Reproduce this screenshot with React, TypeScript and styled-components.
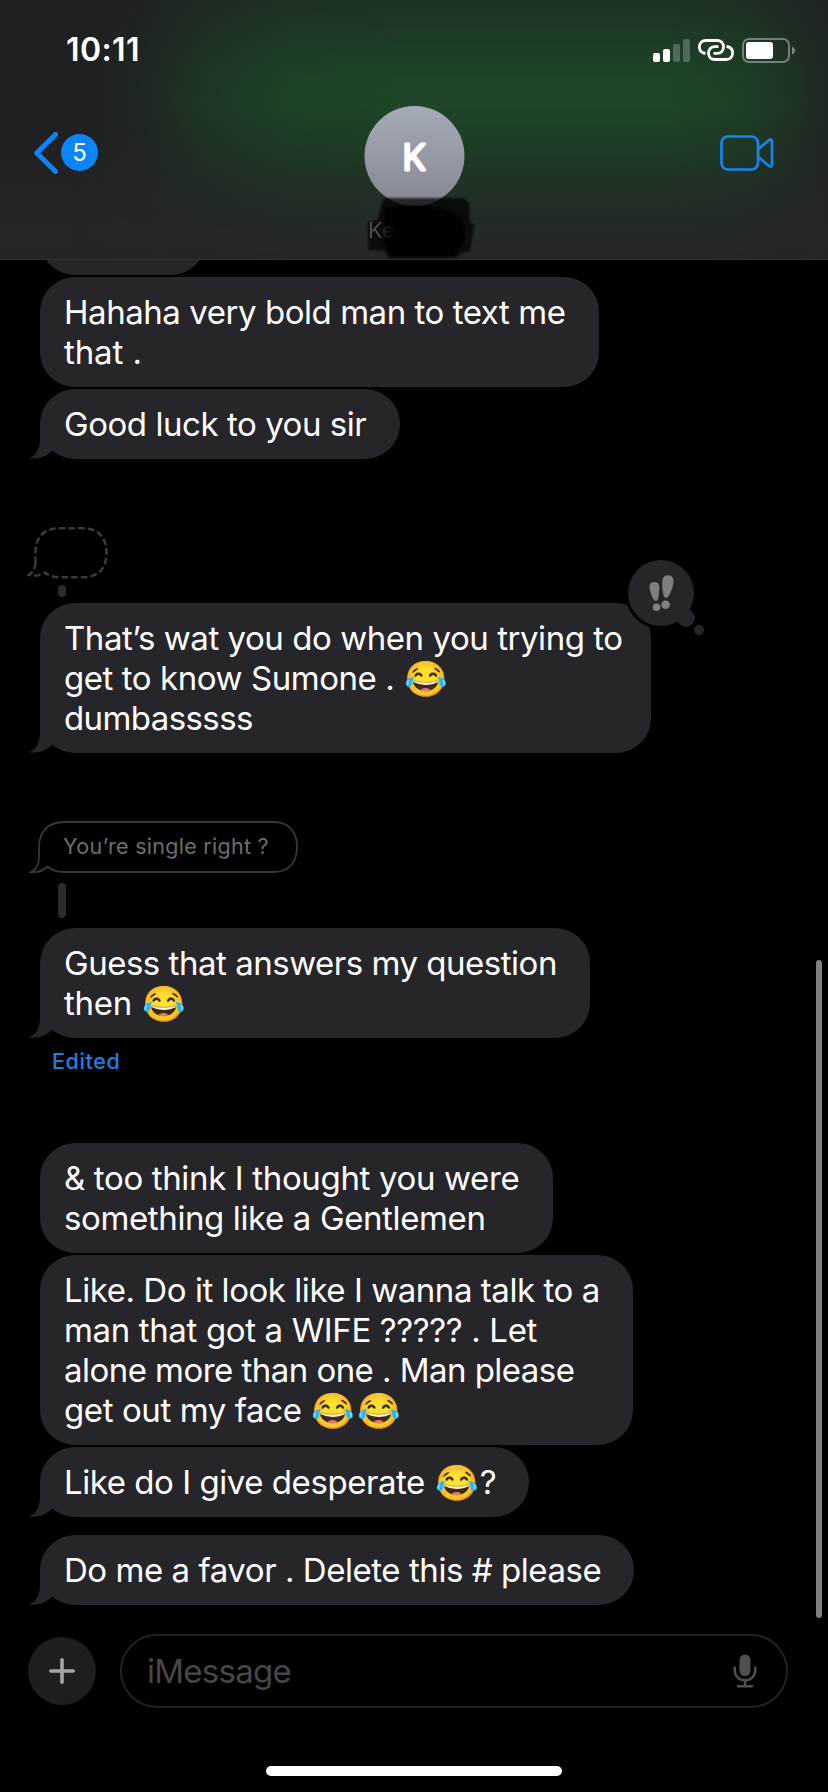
import React from 'react';
import styled, { createGlobalStyle } from 'styled-components';

const Global = createGlobalStyle`
  * { box-sizing: border-box; }
  body { margin: 0; background: #000; font-family: Inter, "Liberation Sans", sans-serif; }
`;

const Screen = styled.div`
  position: relative;
  width: 828px;
  height: 1792px;
  background: #000;
  color: #fff;
  overflow: hidden;
  display: flex;
  flex-direction: column;
`;

const Header = styled.header`
  position: relative;
  z-index: 0;
  height: 260px;
  flex: none;
  background: linear-gradient(180deg, #1f2021 0%, #202021 50%, #262627 90%, #252526 100%);
  border-bottom: 1px solid #2f3130;
  display: flex;
  flex-direction: column;

  &::before {
    content: '';
    position: absolute;
    inset: 0;
    z-index: -1;
    background: linear-gradient(
      90deg,
      rgba(30, 70, 39, 0) 70px,
      rgba(30, 70, 39, 0.18) 140px,
      rgba(30, 70, 39, 0.6) 205px,
      rgba(30, 70, 39, 0.92) 290px,
      rgba(30, 70, 39, 1) 400px,
      rgba(30, 70, 39, 1) 670px,
      rgba(30, 70, 39, 0.85) 740px,
      rgba(30, 70, 39, 0.5) 795px,
      rgba(30, 70, 39, 0.22) 828px
    );
    mask-image: linear-gradient(
      180deg,
      rgba(0, 0, 0, 0.48) 0,
      rgba(0, 0, 0, 0.7) 35px,
      rgba(0, 0, 0, 0.96) 75px,
      rgba(0, 0, 0, 1) 108px,
      rgba(0, 0, 0, 0.75) 145px,
      rgba(0, 0, 0, 0.42) 185px,
      rgba(0, 0, 0, 0.18) 220px,
      rgba(0, 0, 0, 0.06) 258px
    );
  }
`;

const StatusBar = styled.div`
  height: 100px;
  padding: 0 32px 0 66px;
  display: flex;
  align-items: center;
  justify-content: space-between;
`;

const Clock = styled.time`
  font-size: 32px;
  font-weight: 600;
  line-height: 40px;
  letter-spacing: 0.4px;
`;

const StatusIcons = styled.div`
  display: flex;
  align-items: center;
  gap: 8px;
  svg { display: block; }
`;

const NavBar = styled.div`
  display: grid;
  grid-template-columns: 1fr 140px 1fr;
  padding: 6px 54px 0 33px;
`;

const Back = styled.div`
  height: 93px;
  display: flex;
  align-items: center;
  gap: 3px;
`;

const Badge = styled.span`
  width: 37px;
  height: 37px;
  border-radius: 50%;
  background: #0a84ff;
  font-size: 24px;
  line-height: 37px;
  text-align: center;
`;

const Contact = styled.div`
  position: relative;
  display: flex;
  flex-direction: column;
  align-items: center;
  transform: translateX(10.5px);
`;

const Avatar = styled.div`
  width: 100px;
  height: 100px;
  border-radius: 50%;
  background: linear-gradient(#a6abb9, #858891);
  svg { display: block; }
`;

const Initial = styled.text`
  font-size: 35.5px;
  font-weight: 300;
  fill: #fff;
  stroke: #fff;
  stroke-width: 3.2px;
  stroke-linejoin: round;
  text-anchor: middle;
`;

const ContactName = styled.div`
  position: relative;
  z-index: 1;
  width: 92px;
  margin-top: 10px;
  font-size: 22px;
  line-height: 28px;
  color: transparent;
  background: linear-gradient(90deg, #4d4e4e 10px, #242525 16px, #070707 24px);
  background-clip: text;
  -webkit-background-clip: text;
`;

const Scribble = styled.svg`
  position: absolute;
  left: 20px;
  top: 88px;
`;

const Video = styled.div`
  height: 93px;
  display: flex;
  align-items: center;
  justify-content: flex-end;
`;

const Thread = styled.main`
  height: 1355px;
  flex: none;
  padding-left: 40px;
  overflow: hidden;
  display: flex;
  flex-direction: column;
  align-items: flex-start;
`;

const Bubble = styled.div<{ $w: number; $gap?: number }>`
  position: relative;
  flex: none;
  width: ${p => p.$w}px;
  margin-top: ${p => p.$gap ?? 2}px;
  padding: 15px 0 15px 24px;
  border-radius: 35px;
  background: #26252a;
`;

const Line = styled.div<{ $track?: number }>`
  height: 40px;
  font-size: 33px;
  line-height: 40px;
  white-space: pre;
  letter-spacing: ${p => p.$track ?? -0.45}px;
`;

const Emoji = styled.span`
  display: inline-block;
  width: 46px;
  height: 40px;
  vertical-align: top;
  letter-spacing: 0;
  text-indent: 1px;
  font-size: 35px;
`;

const ClippedBubble = styled.div`
  flex: none;
  width: 166px;
  height: 70px;
  margin-top: -55px;
  border-radius: 35px;
  background: #26252a;
`;

const TailSvg = styled.svg`
  position: absolute;
  left: -11px;
  bottom: 0;
`;

const Tapback = styled.svg`
  position: absolute;
  left: 583px;
  top: -46px;
`;

const Connector = styled.div<{ $h: number; $gap: number }>`
  flex: none;
  width: 8px;
  height: ${p => p.$h}px;
  margin: ${p => p.$gap}px 0 0 18px;
  border-radius: 4px;
  background: #2b2b2c;
`;

const EmptyQuote = styled.svg`
  display: block;
  flex: none;
  margin: 67px 0 0 -13px;
`;

const Quote = styled.div`
  position: relative;
  flex: none;
  width: 260px;
  height: 52px;
  margin: 68px 0 0 -2px;
  padding-left: 25px;
  font-size: 21.5px;
  line-height: 51px;
  letter-spacing: 0.27px;
  white-space: pre;
  color: #6d6d70;
`;

const QuoteOutline = styled.svg`
  position: absolute;
  left: -10px;
  top: 0;
`;

const Edited = styled.div`
  flex: none;
  height: 28px;
  margin: 9px 0 0 12px;
  font-size: 21.5px;
  font-weight: 500;
  line-height: 28px;
  letter-spacing: 0.6px;
  color: #1c82e8;
`;

const ScrollThumb = styled.div`
  position: absolute;
  left: 816px;
  top: 960px;
  width: 6px;
  height: 658px;
  border-radius: 3px;
  background: #808080;
`;

const Composer = styled.footer`
  display: flex;
  align-items: center;
  gap: 24px;
  padding: 19px 40px 0 28px;
`;

const AddButton = styled.div`
  width: 68px;
  height: 68px;
  border-radius: 50%;
  background: #1e1e20;
  display: flex;
  align-items: center;
  justify-content: center;
`;

const Field = styled.div`
  flex: 1;
  height: 74px;
  border: 2px solid #222224;
  border-radius: 37px;
  padding: 0 29px 0 25px;
  display: flex;
  align-items: center;
  justify-content: space-between;
  font-size: 33px;
  letter-spacing: -0.75px;
  color: #47474a;
`;

const HomeIndicator = styled.div`
  width: 296px;
  height: 10px;
  margin: 58px auto 0;
  border-radius: 5px;
  background: #fff;
`;

const Tail = () => (
  <TailSvg width="40" height="34" viewBox="0 0 40 34">
    <path d="M11 0 V13 C11 23 8 30 0 33.6 C10 34.6 17 31.5 23.5 25.8 L34 10 Z" fill="#26252a" />
  </TailSvg>
);

export default function App() {
  return (
    <Screen>
      <Global />
      <Header>
        <StatusBar>
          <Clock>10:11</Clock>
          <StatusIcons>
            <svg width="37" height="25" viewBox="0 0 37 25" fill="#fff">
              <rect x="0" y="15" width="7" height="9" rx="2" />
              <rect x="10" y="11" width="7" height="13" rx="2" />
              <rect x="20" y="6" width="7" height="18" rx="2" opacity=".23" />
              <rect x="30" y="1" width="7" height="23" rx="2" opacity=".23" />
            </svg>
            <svg width="36" height="22" viewBox="0 0 36 22" fill="none" stroke="#fff" strokeWidth="2.8">
              <path d="M7.5 14.5 C3.5 14 1.4 11.4 1.4 8 C1.4 4 4 1.5 8 1.5 H19 C23 1.5 25.5 4.3 25.5 7.8 C25.5 11.6 23 14.4 19 14.4 H15.5" />
              <path d="M28.5 7.5 C32.5 8 34.6 10.6 34.6 14 C34.6 18 32 20.5 28 20.5 H17 C13 20.5 10.5 17.7 10.5 14.2 C10.5 10.4 13 7.6 17 7.6 H20.5" />
            </svg>
            <svg width="54" height="25" viewBox="0 0 54 25">
              <rect x="1" y="1" width="46" height="23" rx="6" fill="none" stroke="#fff" strokeWidth="2" opacity=".38" />
              <rect x="4" y="4" width="27" height="17" rx="3" fill="#fff" />
              <path d="M50 8.5 C54 10 54 15 50 16.5 Z" fill="#fff" opacity=".42" />
            </svg>
          </StatusIcons>
        </StatusBar>
        <NavBar>
          <Back>
            <svg width="25" height="42" viewBox="0 0 25 42" fill="none" stroke="#0a84ff" strokeWidth="5" strokeLinecap="round" strokeLinejoin="round">
              <path d="M22.5 2.5 L3.8 21 L22.5 39.5" />
            </svg>
            <Badge>5</Badge>
          </Back>
          <Contact>
            <Avatar>
              <svg width="100" height="100" viewBox="0 0 100 100">
                <Initial x="49.5" y="64">K</Initial>
              </svg>
            </Avatar>
            <ContactName>Ke</ContactName>
            <Scribble width="120" height="70" viewBox="0 0 120 70">
              <defs>
                <filter id="soft"><feGaussianBlur stdDeviation="1.2" /></filter>
              </defs>
              <g filter="url(#soft)">
                <path d="M18 6 Q20 3 28 4 L98 4 Q105 6 105 14 L105 28 L110 30 L106 56 L96 60 L92 64 L24 64 L20 57 L4 56 L3 28 L13 26 Z" fill="#000" opacity=".72" />
                <path d="M20 14 Q50 9 80 15 L99 24 L101 46 L88 63 L26 63 L19 48 Z" fill="#000" opacity=".9" />
              </g>
            </Scribble>
          </Contact>
          <Video>
            <svg width="54" height="36" viewBox="0 0 54 36" fill="none" stroke="#1685ee" strokeWidth="2.7" strokeLinejoin="round">
              <rect x="1.5" y="1.5" width="36.5" height="33" rx="6.5" />
              <path d="M38.5 14 L49 5 Q52 3 52 7 V29 Q52 33 49 31 L38.5 22" />
            </svg>
          </Video>
        </NavBar>
      </Header>

      <Thread>
        <ClippedBubble />
        <Bubble $w={559}>
          <Line>Hahaha very bold man to text me</Line>
          <Line $track={-0.1}>that .</Line>
        </Bubble>
        <Bubble $w={360}>
          <Line>Good luck to you sir</Line>
          <Tail />
        </Bubble>

        <EmptyQuote width="84" height="54" viewBox="0 0 84 54" fill="none" stroke="#3a3a3c" strokeWidth="2.6" strokeLinecap="round" strokeDasharray="4.5 5.2">
          <path d="M8.5 36 V27 C8.5 11 17 2.2 33 2.2 H55 C71 2.2 79.5 11 79.5 27 C79.5 43 71 51.2 55 51.2 H33 C26 51.2 22 50 18 46.5 C12 50 7 50 2 49 C6 46 8.5 42 8.5 36" />
        </EmptyQuote>
        <Connector $h={12} $gap={5} />
        <Bubble $w={611} $gap={6}>
          <Line>That’s wat you do when you trying to</Line>
          <Line $track={-0.44}>get to know Sumone . <Emoji>😂</Emoji></Line>
          <Line $track={-0.6}>dumbasssss</Line>
          <Tail />
          <Tapback width="90" height="86" viewBox="0 0 90 86">
            <circle cx="38" cy="36" r="36" fill="#000" />
            <g fill="#26252a">
              <circle cx="38" cy="36" r="33" />
              <circle cx="63" cy="61" r="9" />
              <circle cx="76" cy="73" r="5" />
            </g>
            <g fill="#808082">
              <path d="M26.6 31 C26 27 28 25 31.5 25 C35 25 36.3 27 36.3 31 C36.2 36 35.4 44 33 44 C30 44 27.5 36 26.6 31Z" />
              <path d="M39.3 26 C39.3 21 41 18.3 45 18.3 C49 18.3 50.8 21 50.4 25.5 C49.5 32 46 41 43 41 C39.8 41 39.3 32 39.3 26Z" />
              <circle cx="33.5" cy="50.3" r="3.8" />
              <circle cx="42.6" cy="47.8" r="4.3" />
            </g>
          </Tapback>
        </Bubble>

        <Quote>
          <QuoteOutline width="272" height="52" viewBox="0 0 272 52" fill="none" stroke="#38383a" strokeWidth="1.8">
            <path d="M11 36 V26 C11 11 20 1 36 1 H246 C262 1 269 12 269 26 C269 40 262 51 246 51 H36 C28 51 24 49.5 19.5 45.5 C15 50 10 51.5 3 51 C9 48 11 43 11 36 Z" />
          </QuoteOutline>
          You’re single right ?
        </Quote>
        <Connector $h={35} $gap={10} />
        <Bubble $w={550} $gap={10}>
          <Line $track={-0.48}>Guess that answers my question</Line>
          <Line $track={-0.3}>then <Emoji>😂</Emoji></Line>
          <Tail />
        </Bubble>
        <Edited>Edited</Edited>

        <Bubble $w={513} $gap={68}>
          <Line $track={-0.35}>& too think I thought you were</Line>
          <Line $track={-0.38}>something like a Gentlemen</Line>
        </Bubble>
        <Bubble $w={593}>
          <Line>Like. Do it look like I wanna talk to a</Line>
          <Line $track={-0.36}>man that got a WIFE ????? . Let</Line>
          <Line $track={-0.54}>alone more than one . Man please</Line>
          <Line $track={-0.4}>get out my face <Emoji>😂</Emoji><Emoji>😂</Emoji></Line>
        </Bubble>
        <Bubble $w={489}>
          <Line>Like do I give desperate <Emoji>😂</Emoji>?</Line>
          <Tail />
        </Bubble>
        <Bubble $w={594} $gap={18}>
          <Line>Do me a favor . Delete this # please</Line>
          <Tail />
        </Bubble>
      </Thread>

      <Composer>
        <AddButton>
          <svg width="26" height="26" viewBox="0 0 26 26" stroke="#a5a5a8" strokeWidth="3.6" strokeLinecap="round">
            <path d="M13 1.8 V24.2 M1.8 13 H24.2" />
          </svg>
        </AddButton>
        <Field>
          <span>iMessage</span>
          <svg width="24" height="34" viewBox="0 0 24 34" fill="none" stroke="#505052" strokeWidth="2.5" strokeLinecap="round">
            <rect x="6.5" y="0.5" width="11" height="21.5" rx="5.5" fill="#505052" stroke="none" />
            <path d="M1.7 13.5 V16 C1.7 22 6 26.3 12 26.3 C18 26.3 22.3 22 22.3 16 V13.5 M12 26.5 V32 M5 32.2 H19" />
          </svg>
        </Field>
      </Composer>
      <HomeIndicator />
      <ScrollThumb />
    </Screen>
  );
}
